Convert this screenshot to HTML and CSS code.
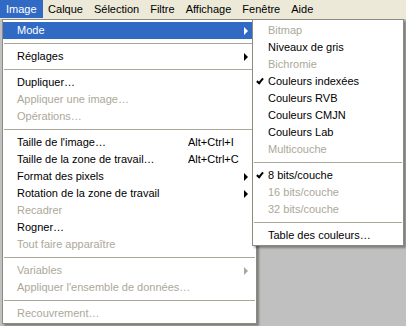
FILE: index.html
```html
<!DOCTYPE html>
<html lang="fr">
<head>
<meta charset="utf-8">
<link rel="stylesheet" href="styles.css">
</head>
<body>
<div class="menubar">
  <span class="mb-item active">Image</span>
  <span class="mb-item">Calque</span>
  <span class="mb-item">Sélection</span>
  <span class="mb-item">Filtre</span>
  <span class="mb-item">Affichage</span>
  <span class="mb-item">Fenêtre</span>
  <span class="mb-item">Aide</span>
</div>

<div class="menu main">
  <div class="item selected sub">Mode</div>
  <div class="sep"></div>
  <div class="item sub">Réglages</div>
  <div class="sep"></div>
  <div class="item">Dupliquer…</div>
  <div class="item disabled">Appliquer une image…</div>
  <div class="item disabled">Opérations…</div>
  <div class="sep"></div>
  <div class="item"><span class="label">Taille de l'image…</span><span class="key">Alt+Ctrl+I</span></div>
  <div class="item"><span class="label">Taille de la zone de travail…</span><span class="key">Alt+Ctrl+C</span></div>
  <div class="item sub">Format des pixels</div>
  <div class="item sub">Rotation de la zone de travail</div>
  <div class="item disabled">Recadrer</div>
  <div class="item">Rogner…</div>
  <div class="item disabled">Tout faire apparaître</div>
  <div class="sep"></div>
  <div class="item disabled sub">Variables</div>
  <div class="item disabled">Appliquer l'ensemble de données…</div>
  <div class="sep"></div>
  <div class="item disabled">Recouvrement…</div>
</div>

<div class="menu submenu">
  <div class="item disabled">Bitmap</div>
  <div class="item">Niveaux de gris</div>
  <div class="item disabled">Bichromie</div>
  <div class="item checked">Couleurs indexées</div>
  <div class="item">Couleurs RVB</div>
  <div class="item">Couleurs CMJN</div>
  <div class="item">Couleurs Lab</div>
  <div class="item disabled">Multicouche</div>
  <div class="sep"></div>
  <div class="item checked">8 bits/couche</div>
  <div class="item disabled">16 bits/couche</div>
  <div class="item disabled">32 bits/couche</div>
  <div class="sep"></div>
  <div class="item">Table des couleurs…</div>
</div>
</body>
</html>
```
FILE: styles.css
```css
html, body {
  margin: 0;
  padding: 0;
}
body {
  width: 406px;
  height: 326px;
  overflow: hidden;
  position: relative;
  background: #c0c0c0;
  font-family: "Liberation Sans", Arial, sans-serif;
  font-size: 11px;
  color: #000;
}
.menubar {
  height: 19px;
  background: #ece9d8;
  display: flex;
  align-items: flex-start;
}
.mb-item {
  height: 18px;
  line-height: 18px;
  padding: 0 5.5px;
}
.mb-item.active {
  padding: 0 6px;
  background: #316ac5;
  color: #fff;
}
.menu {
  position: absolute;
  top: 19px;
  background: #fff;
  border: 1px solid #8d8a80;
  box-shadow: 2px 2px 2px rgba(0,0,0,0.35);
  padding: 2px 0 0;
  box-sizing: border-box;
}
.main {
  left: 2px;
  width: 255px;
  height: 305px;
}
.submenu {
  left: 252px;
  width: 152px;
  height: 227px;
}
.item {
  position: relative;
  height: 17px;
  line-height: 17px;
  padding-left: 14px;
  display: flex;
  white-space: nowrap;
}
.submenu .item {
  padding-left: 15px;
}
.label {
  width: 171px;
}
.item.disabled {
  color: #aca899;
}
.item.selected {
  background: #316ac5;
  color: #fff;
}
.item.sub::after {
  content: "";
  position: absolute;
  right: 8px;
  top: 5px;
  border-left: 4px solid #000;
  border-top: 4px solid transparent;
  border-bottom: 4px solid transparent;
}
.item.sub.selected::after {
  border-left-color: #fff;
}
.item.sub.disabled::after {
  border-left-color: #aca899;
}
.item.checked::before {
  content: "";
  position: absolute;
  left: 5px;
  top: 4px;
  width: 2px;
  height: 5px;
  border: solid #000;
  border-width: 0 2px 2px 0;
  transform: rotate(40deg);
}
.sep {
  height: 9px;
  position: relative;
}
.sep::after {
  content: "";
  position: absolute;
  left: 1px;
  right: 1px;
  top: 4px;
  border-top: 1px solid #aca899;
}
```
